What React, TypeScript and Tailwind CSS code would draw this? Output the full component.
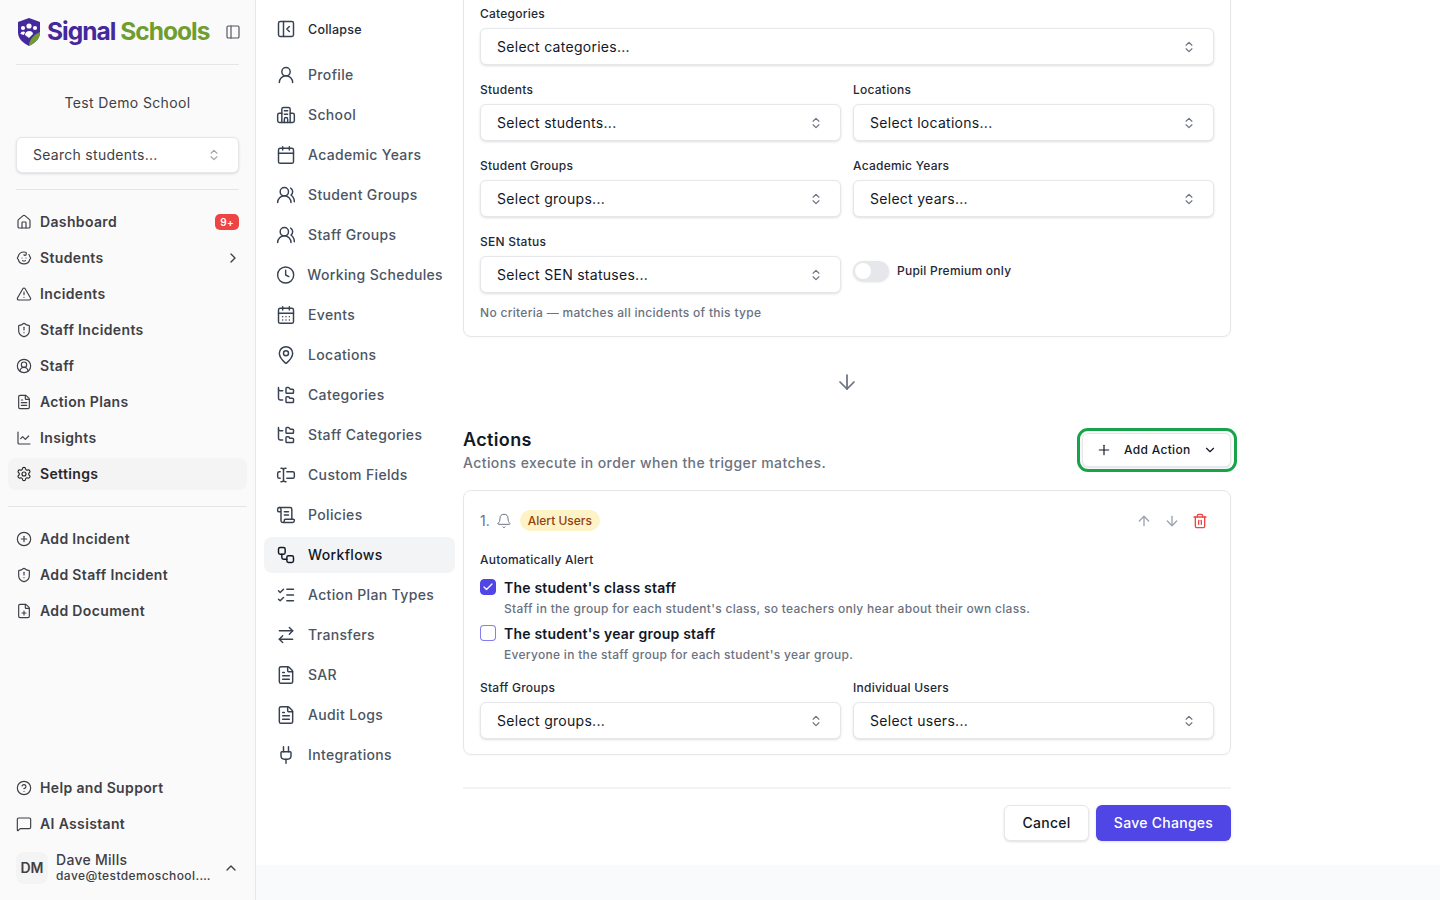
import type { ComponentType } from "react";
import {
  ArrowDown,
  ArrowRightLeft,
  ArrowUp,
  Baby,
  Bell,
  Calendar,
  CalendarDays,
  ChartLine,
  Check,
  ChevronDown,
  ChevronRight,
  ChevronsUpDown,
  ChevronUp,
  CircleHelp,
  CirclePlus,
  CircleUserRound,
  Clock,
  FilePlus,
  FileText,
  FolderTree,
  House,
  ListChecks,
  MapPin,
  MessageSquare,
  PanelLeft,
  PanelLeftClose,
  Plug,
  Plus,
  ScrollText,
  Settings,
  ShieldAlert,
  TextCursorInput,
  Trash2,
  TriangleAlert,
  UserRound,
  UsersRound,
  Workflow,
} from "lucide-react";

type Icon = ComponentType<{ size?: number; strokeWidth?: number; className?: string }>;

function SchoolIcon({ size = 20, strokeWidth = 2, className }: { size?: number; strokeWidth?: number; className?: string }) {
  return (
    <svg width={size} height={size} viewBox="0 0 24 24" fill="none" stroke="currentColor" strokeWidth={strokeWidth} strokeLinecap="round" strokeLinejoin="round" className={className}>
      <path d="M7 21V5a2 2 0 0 1 2-2h6a2 2 0 0 1 2 2v16" />
      <path d="M7 10H4a2 2 0 0 0-2 2v7a2 2 0 0 0 2 2h16a2 2 0 0 0 2-2v-7a2 2 0 0 0-2-2h-3" />
      <path d="M10 7h4" />
      <path d="M10 11h4" />
      <path d="M10 21v-4a2 2 0 0 1 4 0v4" />
    </svg>
  );
}

const mainNav: { label: string; icon: Icon; active?: boolean; badge?: string; chevron?: boolean }[] = [
  { label: "Dashboard", icon: House, badge: "9+" },
  { label: "Students", icon: Baby, chevron: true },
  { label: "Incidents", icon: TriangleAlert },
  { label: "Staff Incidents", icon: ShieldAlert },
  { label: "Staff", icon: CircleUserRound },
  { label: "Action Plans", icon: FileText },
  { label: "Insights", icon: ChartLine },
  { label: "Settings", icon: Settings, active: true },
];

const addNav: { label: string; icon: Icon }[] = [
  { label: "Add Incident", icon: CirclePlus },
  { label: "Add Staff Incident", icon: ShieldAlert },
  { label: "Add Document", icon: FilePlus },
];

const settingsNav: { label: string; icon: Icon; active?: boolean }[] = [
  { label: "Profile", icon: UserRound },
  { label: "School", icon: SchoolIcon },
  { label: "Academic Years", icon: Calendar },
  { label: "Student Groups", icon: UsersRound },
  { label: "Staff Groups", icon: UsersRound },
  { label: "Working Schedules", icon: Clock },
  { label: "Events", icon: CalendarDays },
  { label: "Locations", icon: MapPin },
  { label: "Categories", icon: FolderTree },
  { label: "Staff Categories", icon: FolderTree },
  { label: "Custom Fields", icon: TextCursorInput },
  { label: "Policies", icon: ScrollText },
  { label: "Workflows", icon: Workflow, active: true },
  { label: "Action Plan Types", icon: ListChecks },
  { label: "Transfers", icon: ArrowRightLeft },
  { label: "SAR", icon: FileText },
  { label: "Audit Logs", icon: FileText },
  { label: "Integrations", icon: Plug },
];

function SideItem({ label, icon: ItemIcon, active, badge, chevron }: { label: string; icon: Icon; active?: boolean; badge?: string; chevron?: boolean }) {
  return (
    <div className={`flex h-8 items-center gap-2 rounded-lg px-2 text-sm font-semibold tracking-[0.025em] ${active ? "bg-[#f4f4f5] text-[#27272a]" : "text-[#3f3f46]"}`}>
      <ItemIcon size={16} strokeWidth={1.75} className="shrink-0" />
      <span className="flex-1">{label}</span>
      {badge && <span className="rounded-[5px] bg-[#ef4444] px-[5px] text-[10px] leading-4 font-semibold text-white">{badge}</span>}
      {chevron && <ChevronRight size={16} className="-mr-0.5" />}
    </div>
  );
}

function Logo() {
  return (
    <div className="flex items-center gap-1.5">
      <svg width="24" height="28" viewBox="0 0 24 28" className="ml-px shrink-0">
        <path d="M12 0 L23 4 V14 C23 21 18 25 12 28 C6 25 1 21 1 14 V4 Z" fill="#44289c" />
        <path d="M23 14 C23 21 18 25 12 28 C12 22 16 17 23 14 Z" fill="#6f9e2f" />
        <circle cx="12" cy="8" r="2.6" fill="#fff" />
        <circle cx="6" cy="10" r="2.1" fill="#fff" />
        <circle cx="18" cy="10" r="2.1" fill="#fff" />
        <path d="M8 17 C8 12 16 12 16 16 L12 20 Z" fill="#fff" />
        <path d="M3.5 16 C3.5 13 7 13 8 14 L7 17 Z" fill="#fff" />
      </svg>
      <span className="-mt-0.5 text-[24.5px] leading-8 font-bold tracking-[-0.04em] whitespace-nowrap">
        <span className="text-[#44289c]">Signal</span> <span className="text-[#6f9e2f]">Schools</span>
      </span>
    </div>
  );
}

function Sidebar() {
  return (
    <aside className="flex h-[900px] w-[256px] shrink-0 flex-col border-r border-[#e5e7eb] bg-[#fafafa]">
      <div className="mx-4 flex h-[65px] items-center justify-between border-b border-[#e5e5e5]">
        <Logo />
        <PanelLeft size={16} strokeWidth={1.75} className="-mr-0.5 text-[#52525b]" />
      </div>
      <div className="mt-[28px] text-center text-sm leading-5 tracking-[0.025em] text-[#3f3f46]">Test Demo School</div>
      <div className="mx-4 mt-[24px] flex h-9 items-center justify-between rounded-md border border-[#e5e7eb] bg-white pr-[17px] pl-4 text-sm tracking-[0.02em] text-[#3f3f46] shadow-sm">
        Search students...
        <ChevronsUpDown size={14} className="text-[#a1a1aa]" />
      </div>
      <div className="mx-4 mt-4 border-b border-[#e5e5e5]" />
      <nav className="mt-4 flex flex-col gap-1 px-2">
        {mainNav.map((item) => (
          <SideItem key={item.label} {...item} />
        ))}
      </nav>
      <div className="mx-2 mt-4 border-b border-[#e5e5e5]" />
      <nav className="mt-4 flex flex-col gap-1 px-2">
        {addNav.map((item) => (
          <SideItem key={item.label} {...item} />
        ))}
      </nav>
      <div className="mt-auto flex flex-col gap-1 px-2">
        <SideItem label="Help and Support" icon={CircleHelp} />
        <SideItem label="AI Assistant" icon={MessageSquare} />
      </div>
      <div className="mt-3 mb-4 flex h-8 items-center px-4">
        <div className="flex size-8 shrink-0 items-center justify-center rounded-lg bg-[#f4f4f5] text-sm font-semibold text-[#3f3f46]">DM</div>
        <div className="ml-2 min-w-0 flex-1 text-[#3f3f46]">
          <div className="text-sm leading-4 font-medium tracking-[0.02em]">Dave Mills</div>
          <div className="truncate text-xs leading-4 font-medium tracking-[0.035em]">dave@testdemoschool.com</div>
        </div>
        <ChevronUp size={16} className="ml-3 shrink-0 text-[#3f3f46]" />
      </div>
    </aside>
  );
}

function SettingsNav() {
  return (
    <nav className="w-[207px] shrink-0 px-2 pt-[11px]">
      <div className="flex h-9 items-center gap-3 px-3 text-[12.5px] font-medium tracking-[0.02em] text-[#1f2937]">
        <PanelLeftClose size={20} strokeWidth={1.75} className="text-[#374151]" />
        <span className="mt-0.5">Collapse</span>
      </div>
      <div className="mt-[10px] flex flex-col gap-1">
        {settingsNav.map(({ label, icon: ItemIcon, active }) => (
          <div key={label} className={`flex h-9 items-center gap-3 rounded-lg px-3 text-sm font-medium tracking-[0.025em] whitespace-nowrap ${active ? "bg-[#f3f4f6] text-[#111827]" : "text-[#4b5563]"}`}>
            <ItemIcon size={20} strokeWidth={1.75} className={active ? "text-[#111827]" : "text-[#374151]"} />
            {label}
          </div>
        ))}
      </div>
    </nav>
  );
}

function Field({ label, placeholder, className = "" }: { label: string; placeholder: string; className?: string }) {
  return (
    <div className={className}>
      <div className="mb-[6px] text-xs leading-4 font-medium tracking-[0.02em] text-[#1f2937]">{label}</div>
      <div className="flex h-[37px] items-center justify-between rounded-md border border-[#e5e7eb] bg-white pr-[17px] pl-4 text-sm tracking-[0.02em] text-[#111827] shadow-sm">
        {placeholder}
        <ChevronsUpDown size={14} className="text-[#6b7280]" />
      </div>
    </div>
  );
}

function CheckRow({ checked, title, hint }: { checked?: boolean; title: string; hint: string }) {
  return (
    <div className="flex gap-2">
      <div className={`mt-[1px] flex size-4 shrink-0 items-center justify-center rounded border ${checked ? "border-[#4f46e5] bg-[#4f46e5]" : "border-[#4f46e5]/70 bg-white"}`}>
        {checked && <Check size={12} strokeWidth={2.5} className="text-white" />}
      </div>
      <div>
        <div className="text-sm leading-5 font-semibold tracking-[0.015em] text-[#111827]">{title}</div>
        <div className="mt-[3px] text-xs leading-4 font-medium tracking-[0.025em] text-[#6b7280]">{hint}</div>
      </div>
    </div>
  );
}

function Content() {
  return (
    <main className="-mt-5 w-[768px] shrink-0">
      <section className="rounded-lg border border-[#e5e7eb] bg-white px-4 pt-[25px] pb-[15px] shadow-[0_1px_2px_rgba(0,0,0,0.03)]">
        <Field label="Categories" placeholder="Select categories..." />
        <div className="mt-[17px] grid grid-cols-2 gap-x-3 gap-y-[17px]">
          <Field label="Students" placeholder="Select students..." />
          <Field label="Locations" placeholder="Select locations..." />
          <Field label="Student Groups" placeholder="Select groups..." />
          <Field label="Academic Years" placeholder="Select years..." />
          <Field label="SEN Status" placeholder="Select SEN statuses..." />
          <div className="flex items-start gap-2 pt-[27px]">
            <div className="flex h-5 w-9 items-center rounded-full bg-[#e5e7eb] px-0.5 shadow-sm">
              <div className="size-4 rounded-full bg-white" />
            </div>
            <span className="text-xs leading-5 font-medium tracking-[0.02em] text-[#1f2937]">Pupil Premium only</span>
          </div>
        </div>
        <p className="mt-[12px] text-xs leading-4 font-medium tracking-[0.025em] text-[#6b7280]">No criteria — matches all incidents of this type</p>
      </section>

      <div className="mt-[33px] flex justify-center">
        <ArrowDown size={24} strokeWidth={1.75} className="text-[#6b7280]" />
      </div>

      <div className="mt-[34px] flex items-start justify-between">
        <div>
          <h2 className="text-lg leading-6 font-semibold tracking-[0.02em] text-[#111827]">Actions</h2>
          <p className="mt-px text-sm leading-5 font-medium tracking-[0.03em] text-[#6b7280]">Actions execute in order when the trigger matches.</p>
        </div>
        <div className="relative mt-[5px] flex h-[34px] w-[149px] items-center rounded-md border border-[#e5e7eb] bg-white pr-[13px] pl-[13px] font-medium tracking-[0.02em] text-[#111827] shadow-sm">
          <Plus size={16} strokeWidth={1.75} />
          <span className="ml-[12px] flex-1 text-xs">Add Action</span>
          <ChevronDown size={14} />
          <div className="absolute -inset-y-[6px] -right-[7px] -left-[6px] rounded-[11px] border-[3px] border-[#16a34a]" />
        </div>
      </div>

      <section className="mt-[17px] rounded-lg border border-[#e5e7eb] bg-white px-4 pt-[19px] pb-[15px] shadow-[0_1px_2px_rgba(0,0,0,0.03)]">
        <div className="flex h-[21px] items-center">
          <span className="text-sm text-[#6b7280]">1.</span>
          <Bell size={16} strokeWidth={1.5} className="ml-[6px] text-[#6b7280]" />
          <span className="ml-2 rounded-full bg-[#fef3c7] px-2 text-xs leading-[21px] font-medium text-[#92400e]">Alert Users</span>
          <ArrowUp size={16} className="ml-auto text-[#9ca3af]" />
          <ArrowDown size={16} className="ml-[12px] text-[#9ca3af]" />
          <Trash2 size={16} className="mr-[6px] ml-[12px] text-[#ef4444]" />
        </div>
        <div className="mt-[21px] text-xs leading-4 font-medium tracking-[0.02em] text-[#1f2937]">Automatically Alert</div>
        <div className="mt-[10px] flex flex-col gap-[7px]">
          <CheckRow checked title="The student's class staff" hint="Staff in the group for each student's class, so teachers only hear about their own class." />
          <CheckRow title="The student's year group staff" hint="Everyone in the staff group for each student's year group." />
        </div>
        <div className="mt-[17px] grid grid-cols-2 gap-x-3">
          <Field label="Staff Groups" placeholder="Select groups..." />
          <Field label="Individual Users" placeholder="Select users..." />
        </div>
      </section>

      <div className="mt-[32px] flex justify-end gap-[7px] border-t-2 border-[#f3f4f6] pt-[16px]">
        <div className="flex h-9 w-[85px] items-center justify-center rounded-md border border-[#e5e7eb] bg-white text-sm font-medium tracking-[0.02em] text-[#111827] shadow-sm">Cancel</div>
        <div className="flex h-9 w-[135px] items-center justify-center rounded-md bg-[#4f46e5] text-sm font-medium tracking-[0.02em] text-white shadow-sm">Save Changes</div>
      </div>
    </main>
  );
}

export default function App() {
  return (
    <div className="flex h-[900px] w-[1440px] overflow-hidden bg-white font-['Inter',sans-serif]">
      <Sidebar />
      <div className="flex min-w-0 flex-1 flex-col bg-[#f9fafb]">
        <div className="flex h-[865px] overflow-hidden bg-white">
          <SettingsNav />
          <Content />
        </div>
      </div>
    </div>
  );
}
